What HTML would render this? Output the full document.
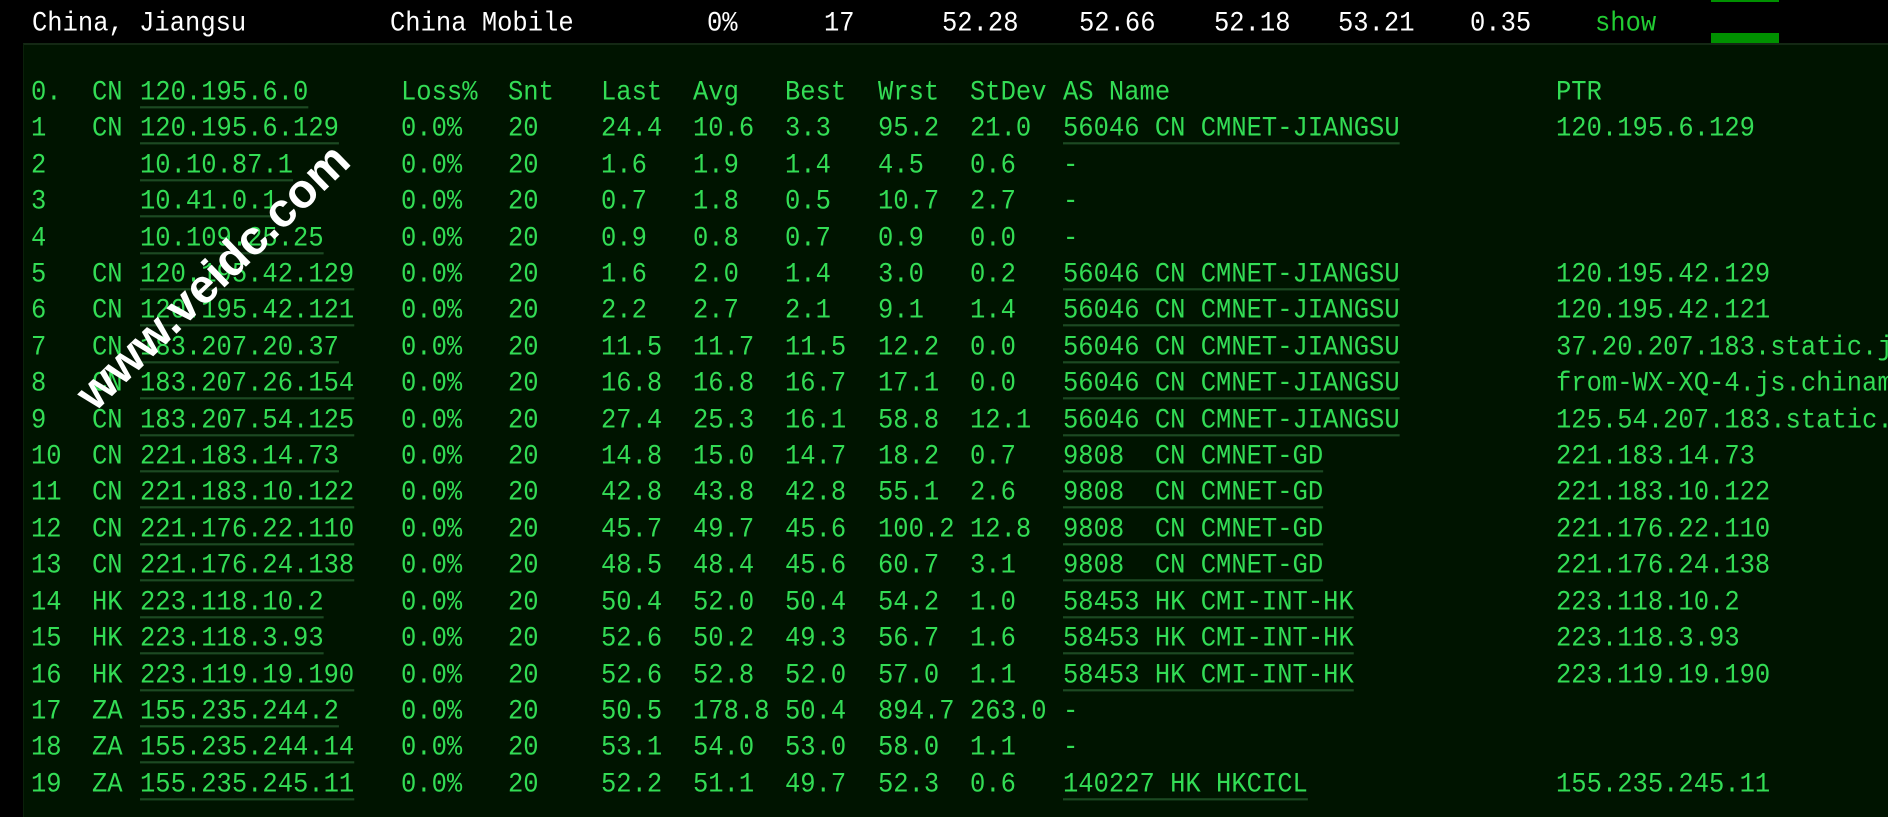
<!DOCTYPE html>
<html><head><meta charset="utf-8"><style>
html,body{margin:0;padding:0;background:#000;width:1888px;height:817px;overflow:hidden;position:relative;font-family:"Liberation Mono",monospace;}
.h{position:absolute;top:6px;height:36px;line-height:36px;font-size:25.5px;color:#fff;white-space:pre;transform:scaleY(1.1);transform-origin:50% 50%}
.panel{position:absolute;left:23px;top:43px;right:0;bottom:0;background:#001400;border-top:2px solid #142814;border-left:1px solid #0a200a;}
.r{position:absolute;left:0;height:36px;line-height:36px;font-size:25.5px;color:#33dd55;white-space:pre;width:1888px;overflow:hidden}
.r span{position:absolute;top:1px;transform:scaleY(1.1);transform-origin:50% 50%}
.u{text-decoration:underline;text-decoration-color:#1c4a22;text-decoration-thickness:2px;text-underline-offset:6px}
.c0{left:31px}.c1{left:92px}.c2{left:140px}.c3{left:401px}.c4{left:508px}.c5{left:601px}.c6{left:693px}.c7{left:785px}.c8{left:878px}.c9{left:970px}.c10{left:1063px}.c11{left:1556px}
.wm{position:absolute;left:213px;top:277px;transform:translate(-50%,-50%) rotate(-44deg);font-family:"Liberation Sans",sans-serif;font-weight:bold;font-size:48px;color:#fff;white-space:nowrap;letter-spacing:0px}
.bar{position:absolute;left:1711px;width:68px;background:#009000}
</style></head><body>
<div class="h" style="left:32px">China, Jiangsu</div>
<div class="h" style="left:390px">China Mobile</div>
<div class="h" style="left:707px">0%</div>
<div class="h" style="left:824px">17</div>
<div class="h" style="left:942px">52.28</div>
<div class="h" style="left:1079px">52.66</div>
<div class="h" style="left:1214px">52.18</div>
<div class="h" style="left:1338px">53.21</div>
<div class="h" style="left:1470px">0.35</div>
<div class="h" style="left:1595px;color:#22cc33">show</div>
<div class="bar" style="top:0;height:2px"></div>
<div class="bar" style="top:33px;height:10px"></div>
<div class="panel"></div>
<div class="r" style="top:74px"><span class="c0">0.</span><span class="c1">CN</span><span class="c2 u">120.195.6.0</span><span class="c3">Loss%</span><span class="c4">Snt</span><span class="c5">Last</span><span class="c6">Avg</span><span class="c7">Best</span><span class="c8">Wrst</span><span class="c9">StDev</span><span class="c10">AS Name</span><span class="c11">PTR</span></div>
<div class="r" style="top:110px"><span class="c0">1</span><span class="c1">CN</span><span class="c2 u">120.195.6.129</span><span class="c3">0.0%</span><span class="c4">20</span><span class="c5">24.4</span><span class="c6">10.6</span><span class="c7">3.3</span><span class="c8">95.2</span><span class="c9">21.0</span><span class="c10 u">56046 CN CMNET-JIANGSU</span><span class="c11">120.195.6.129</span></div>
<div class="r" style="top:147px"><span class="c0">2</span><span class="c2 u">10.10.87.1</span><span class="c3">0.0%</span><span class="c4">20</span><span class="c5">1.6</span><span class="c6">1.9</span><span class="c7">1.4</span><span class="c8">4.5</span><span class="c9">0.6</span><span class="c10">-</span></div>
<div class="r" style="top:183px"><span class="c0">3</span><span class="c2 u">10.41.0.1</span><span class="c3">0.0%</span><span class="c4">20</span><span class="c5">0.7</span><span class="c6">1.8</span><span class="c7">0.5</span><span class="c8">10.7</span><span class="c9">2.7</span><span class="c10">-</span></div>
<div class="r" style="top:220px"><span class="c0">4</span><span class="c2 u">10.109.25.25</span><span class="c3">0.0%</span><span class="c4">20</span><span class="c5">0.9</span><span class="c6">0.8</span><span class="c7">0.7</span><span class="c8">0.9</span><span class="c9">0.0</span><span class="c10">-</span></div>
<div class="r" style="top:256px"><span class="c0">5</span><span class="c1">CN</span><span class="c2 u">120.195.42.129</span><span class="c3">0.0%</span><span class="c4">20</span><span class="c5">1.6</span><span class="c6">2.0</span><span class="c7">1.4</span><span class="c8">3.0</span><span class="c9">0.2</span><span class="c10 u">56046 CN CMNET-JIANGSU</span><span class="c11">120.195.42.129</span></div>
<div class="r" style="top:292px"><span class="c0">6</span><span class="c1">CN</span><span class="c2 u">120.195.42.121</span><span class="c3">0.0%</span><span class="c4">20</span><span class="c5">2.2</span><span class="c6">2.7</span><span class="c7">2.1</span><span class="c8">9.1</span><span class="c9">1.4</span><span class="c10 u">56046 CN CMNET-JIANGSU</span><span class="c11">120.195.42.121</span></div>
<div class="r" style="top:329px"><span class="c0">7</span><span class="c1">CN</span><span class="c2 u">183.207.20.37</span><span class="c3">0.0%</span><span class="c4">20</span><span class="c5">11.5</span><span class="c6">11.7</span><span class="c7">11.5</span><span class="c8">12.2</span><span class="c9">0.0</span><span class="c10 u">56046 CN CMNET-JIANGSU</span><span class="c11">37.20.207.183.static.js</span></div>
<div class="r" style="top:365px"><span class="c0">8</span><span class="c1">CN</span><span class="c2 u">183.207.26.154</span><span class="c3">0.0%</span><span class="c4">20</span><span class="c5">16.8</span><span class="c6">16.8</span><span class="c7">16.7</span><span class="c8">17.1</span><span class="c9">0.0</span><span class="c10 u">56046 CN CMNET-JIANGSU</span><span class="c11">from-WX-XQ-4.js.chinam</span></div>
<div class="r" style="top:402px"><span class="c0">9</span><span class="c1">CN</span><span class="c2 u">183.207.54.125</span><span class="c3">0.0%</span><span class="c4">20</span><span class="c5">27.4</span><span class="c6">25.3</span><span class="c7">16.1</span><span class="c8">58.8</span><span class="c9">12.1</span><span class="c10 u">56046 CN CMNET-JIANGSU</span><span class="c11">125.54.207.183.static.</span></div>
<div class="r" style="top:438px"><span class="c0">10</span><span class="c1">CN</span><span class="c2 u">221.183.14.73</span><span class="c3">0.0%</span><span class="c4">20</span><span class="c5">14.8</span><span class="c6">15.0</span><span class="c7">14.7</span><span class="c8">18.2</span><span class="c9">0.7</span><span class="c10 u">9808  CN CMNET-GD</span><span class="c11">221.183.14.73</span></div>
<div class="r" style="top:474px"><span class="c0">11</span><span class="c1">CN</span><span class="c2 u">221.183.10.122</span><span class="c3">0.0%</span><span class="c4">20</span><span class="c5">42.8</span><span class="c6">43.8</span><span class="c7">42.8</span><span class="c8">55.1</span><span class="c9">2.6</span><span class="c10 u">9808  CN CMNET-GD</span><span class="c11">221.183.10.122</span></div>
<div class="r" style="top:511px"><span class="c0">12</span><span class="c1">CN</span><span class="c2 u">221.176.22.110</span><span class="c3">0.0%</span><span class="c4">20</span><span class="c5">45.7</span><span class="c6">49.7</span><span class="c7">45.6</span><span class="c8">100.2</span><span class="c9">12.8</span><span class="c10 u">9808  CN CMNET-GD</span><span class="c11">221.176.22.110</span></div>
<div class="r" style="top:547px"><span class="c0">13</span><span class="c1">CN</span><span class="c2 u">221.176.24.138</span><span class="c3">0.0%</span><span class="c4">20</span><span class="c5">48.5</span><span class="c6">48.4</span><span class="c7">45.6</span><span class="c8">60.7</span><span class="c9">3.1</span><span class="c10 u">9808  CN CMNET-GD</span><span class="c11">221.176.24.138</span></div>
<div class="r" style="top:584px"><span class="c0">14</span><span class="c1">HK</span><span class="c2 u">223.118.10.2</span><span class="c3">0.0%</span><span class="c4">20</span><span class="c5">50.4</span><span class="c6">52.0</span><span class="c7">50.4</span><span class="c8">54.2</span><span class="c9">1.0</span><span class="c10 u">58453 HK CMI-INT-HK</span><span class="c11">223.118.10.2</span></div>
<div class="r" style="top:620px"><span class="c0">15</span><span class="c1">HK</span><span class="c2 u">223.118.3.93</span><span class="c3">0.0%</span><span class="c4">20</span><span class="c5">52.6</span><span class="c6">50.2</span><span class="c7">49.3</span><span class="c8">56.7</span><span class="c9">1.6</span><span class="c10 u">58453 HK CMI-INT-HK</span><span class="c11">223.118.3.93</span></div>
<div class="r" style="top:657px"><span class="c0">16</span><span class="c1">HK</span><span class="c2 u">223.119.19.190</span><span class="c3">0.0%</span><span class="c4">20</span><span class="c5">52.6</span><span class="c6">52.8</span><span class="c7">52.0</span><span class="c8">57.0</span><span class="c9">1.1</span><span class="c10 u">58453 HK CMI-INT-HK</span><span class="c11">223.119.19.190</span></div>
<div class="r" style="top:693px"><span class="c0">17</span><span class="c1">ZA</span><span class="c2 u">155.235.244.2</span><span class="c3">0.0%</span><span class="c4">20</span><span class="c5">50.5</span><span class="c6">178.8</span><span class="c7">50.4</span><span class="c8">894.7</span><span class="c9">263.0</span><span class="c10">-</span></div>
<div class="r" style="top:729px"><span class="c0">18</span><span class="c1">ZA</span><span class="c2 u">155.235.244.14</span><span class="c3">0.0%</span><span class="c4">20</span><span class="c5">53.1</span><span class="c6">54.0</span><span class="c7">53.0</span><span class="c8">58.0</span><span class="c9">1.1</span><span class="c10">-</span></div>
<div class="r" style="top:766px"><span class="c0">19</span><span class="c1">ZA</span><span class="c2 u">155.235.245.11</span><span class="c3">0.0%</span><span class="c4">20</span><span class="c5">52.2</span><span class="c6">51.1</span><span class="c7">49.7</span><span class="c8">52.3</span><span class="c9">0.6</span><span class="c10 u">140227 HK HKCICL</span><span class="c11">155.235.245.11</span></div>
<div class="wm">www.veidc.com</div>
</body></html>
